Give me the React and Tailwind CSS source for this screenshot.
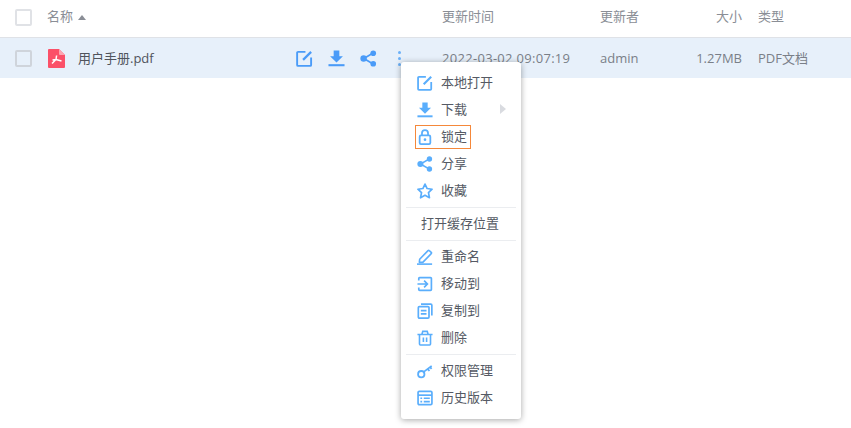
import React from "react";

const EditIcon = ({ className }) => (
  <svg viewBox="0 0 18 18" className={className} fill="none" stroke="currentColor">
    <path d="M10 2H2.2a1 1 0 0 0-1 1v12.8a1 1 0 0 0 1 1H15a1 1 0 0 0 1-1V8" strokeWidth="2" />
    <path d="M7.5 10.5 16 2" strokeWidth="2.4" />
  </svg>
);

const DownloadIcon = ({ className }) => (
  <svg viewBox="0 0 18 18" className={className} fill="currentColor">
    <path d="M6 .5h6v6h3.8L9 13.2 2.2 6.5H6z" />
    <rect x="0.5" y="15" width="17" height="2.2" />
  </svg>
);

const ShareIcon = ({ className }) => (
  <svg viewBox="0 0 18 18" className={className} fill="currentColor" stroke="currentColor">
    <path d="M4 9 13.5 3.5M4 9l9.5 5.5" strokeWidth="1.8" fill="none" />
    <circle cx="3.8" cy="9" r="3.4" stroke="none" />
    <circle cx="14" cy="3.4" r="3" stroke="none" />
    <circle cx="14" cy="14.6" r="3" stroke="none" />
  </svg>
);

const LockIcon = ({ className }) => (
  <svg viewBox="0 0 18 18" className={className} fill="none" stroke="currentColor" strokeWidth="2">
    <rect x="3" y="7.2" width="12" height="9.8" rx="1.5" />
    <path d="M5.6 7V4.6a3.4 3.4 0 0 1 6.8 0V7" />
    <circle cx="9" cy="12" r="1.5" fill="currentColor" stroke="none" />
  </svg>
);

const StarIcon = ({ className }) => (
  <svg viewBox="0 0 18 18" className={className} fill="none" stroke="currentColor" strokeWidth="1.9" strokeLinejoin="round">
    <path d="M9 1.2 11.4 6.2 17 7 12.9 10.8 14 16.6 9 13.8 4 16.6 5.1 10.8 1 7 6.6 6.2z" />
  </svg>
);

const PenIcon = ({ className }) => (
  <svg viewBox="0 0 18 18" className={className} fill="none" stroke="currentColor" strokeWidth="1.8" strokeLinejoin="round">
    <path d="M3 11.5 12.4 1.8a1 1 0 0 1 1.4 0l2.2 2a1 1 0 0 1 0 1.4L6.5 15H2.6z" />
    <path d="M0 17h17" strokeWidth="1.8" />
  </svg>
);

const MoveIcon = ({ className }) => (
  <svg viewBox="0 0 18 18" className={className} fill="none" stroke="currentColor" strokeWidth="1.9">
    <path d="M2 5V2.8a1 1 0 0 1 1-1h12.2a1 1 0 0 1 1 1v12.4a1 1 0 0 1-1 1H3a1 1 0 0 1-1-1V13" />
    <path d="M.5 9H11.5M8 5.3 11.7 9 8 12.7" />
  </svg>
);

const CopyIcon = ({ className }) => (
  <svg viewBox="0 0 18 18" className={className} fill="none" stroke="currentColor" strokeWidth="1.9">
    <rect x="1.5" y="4" width="12" height="13" rx="1.2" />
    <path d="M4.5 1.2h11a1.2 1.2 0 0 1 1.2 1.2v11.8" />
    <path d="M4.3 8.5h6.4M4.3 12.3h6.4" />
  </svg>
);

const TrashIcon = ({ className }) => (
  <svg viewBox="0 0 18 18" className={className} fill="none" stroke="currentColor" strokeWidth="1.8">
    <path d="M.5 5h17M5.5 4.8 6.5 1.5h5l1 3.3" />
    <path d="M2.8 5v10.8a1 1 0 0 0 1 1h10.4a1 1 0 0 0 1-1V5" />
    <path d="M7.2 8.5v5M10.8 8.5v5" />
  </svg>
);

const KeyIcon = ({ className }) => (
  <svg viewBox="0 0 18 18" className={className} fill="none" stroke="currentColor" strokeWidth="2">
    <circle cx="4.8" cy="12.6" r="3.6" />
    <path d="M7.6 10 16.5 3.2M12 6.6l2 2.4M14.8 4.6l1.6 2" />
  </svg>
);

const HistoryIcon = ({ className }) => (
  <svg viewBox="0 0 18 18" className={className} fill="none" stroke="currentColor" strokeWidth="1.9">
    <rect x="1.2" y="1.5" width="15.6" height="15" rx="1.4" />
    <path d="M1.2 5.8h15.6" />
    <path d="M3.8 9.3h2M7.6 9.3h6.8M3.8 13h2M7.6 13h6.8" />
  </svg>
);

const PdfIcon = () => (
  <svg viewBox="0 0 17 19" className="w-[17px] h-[19px]">
    <path d="M1 0h10l6 6v12a1 1 0 0 1-1 1H1a1 1 0 0 1-1-1V1a1 1 0 0 1 1-1z" fill="#fb5068" />
    <path d="M11 0l6 6h-5a1 1 0 0 1-1-1z" fill="#fda5b1" />
    <path d="M8.6 6.5 8 10.5 4 14.5M8 10.5 13.5 12M8 10.5 4.5 11" fill="none" stroke="#fff" strokeWidth="1.5" />
  </svg>
);

const Checkbox = ({ className }) => (
  <span className={`block w-[17px] h-[17px] shrink-0 rounded-[2px] border-2 ${className}`} />
);

const Item = ({ icon: Icon, label, arrow, focused }) => (
  <div className="relative flex items-center h-[27px] pl-[16px] text-[13px] text-[#555a64]">
    <Icon className="w-[16px] h-[16px] text-[#5aaefc]" />
    <span className="ml-[8px]">{label}</span>
    {arrow && <span className="absolute right-[15px] top-[8px] w-0 h-0 border-y-[5px] border-y-transparent border-l-[6px] border-l-[#d9dbe0]" />}
    {focused && <span className="absolute left-[14px] top-[2px] w-[56px] h-[24px] border border-[#f5883a]" />}
  </div>
);

const Divider = () => <div className="h-px bg-[#ebedf0] mx-[5px] mt-[3px] mb-[2px]" />;

export default function App() {
  return (
    <div className="relative w-[851px] h-[428px] overflow-hidden bg-white text-[13px] font-['Open_Sans','Noto_Sans_CJK_SC',sans-serif]">
      <div className="flex items-center h-[37px] pb-[3px] pl-[15px] text-[#8a8e96]">
        <Checkbox className="border-[#e0e2e6] bg-white" />
        <div className="flex items-center w-[395px] ml-[15px]">
          名称
          <span className="ml-[5px] w-0 h-0 border-x-[4px] border-x-transparent border-b-[5px] border-b-[#8a8e96]" />
        </div>
        <div className="w-[158px]">更新时间</div>
        <div className="w-[85px]">更新者</div>
        <div className="w-[57px] text-right">大小</div>
        <div className="ml-[16px]">类型</div>
      </div>

      <div className="flex items-center h-[41px] pl-[15px] bg-[#e7f0fa] border-t border-[#dfe2e7] text-[#7a7f88]">
        <Checkbox className="border-[#cfd4db]" />
        <div className="flex items-center w-[395px] ml-[15px]">
          <span className="ml-[1px]"><PdfIcon /></span>
          <span className="ml-[13px] w-[218px] pt-[2px] text-[#50545c]">用户手册.pdf</span>
          <EditIcon className="w-[17px] h-[17px] text-[#4a9bf8]" />
          <DownloadIcon className="ml-[15px] w-[17px] h-[17px] text-[#4a9bf8]" />
          <ShareIcon className="ml-[15px] w-[17px] h-[17px] text-[#4a9bf8]" />
          <span className="ml-[21px] flex flex-col gap-[3px]">
            <span className="w-[3px] h-[3px] rounded-full bg-[#6bb0f8]" />
            <span className="w-[3px] h-[3px] rounded-full bg-[#6bb0f8]" />
            <span className="w-[3px] h-[3px] rounded-full bg-[#6bb0f8]" />
          </span>
        </div>
        <div className="w-[158px] pt-[2px] tracking-[0.3px]">2022-03-02 09:07:19</div>
        <div className="w-[85px] pt-[2px]">admin</div>
        <div className="w-[57px] pt-[2px] text-right">1.27MB</div>
        <div className="ml-[16px] pt-[2px]">PDF文档</div>
      </div>

      <div className="absolute left-[401px] top-[62px] w-[120px] h-[357px] pt-[7px] bg-white rounded-[3px] shadow-[0_1px_6px_rgba(0,0,0,0.35)]">
        <Item icon={EditIcon} label="本地打开" />
        <Item icon={DownloadIcon} label="下载" arrow />
        <Item icon={LockIcon} label="锁定" focused />
        <Item icon={ShareIcon} label="分享" />
        <Item icon={StarIcon} label="收藏" />
        <Divider />
        <div className="flex items-center h-[27px] pl-[20px] text-[#555a64]">打开缓存位置</div>
        <Divider />
        <Item icon={PenIcon} label="重命名" />
        <Item icon={MoveIcon} label="移动到" />
        <Item icon={CopyIcon} label="复制到" />
        <Item icon={TrashIcon} label="删除" />
        <Divider />
        <Item icon={KeyIcon} label="权限管理" />
        <Item icon={HistoryIcon} label="历史版本" />
      </div>
    </div>
  );
}
